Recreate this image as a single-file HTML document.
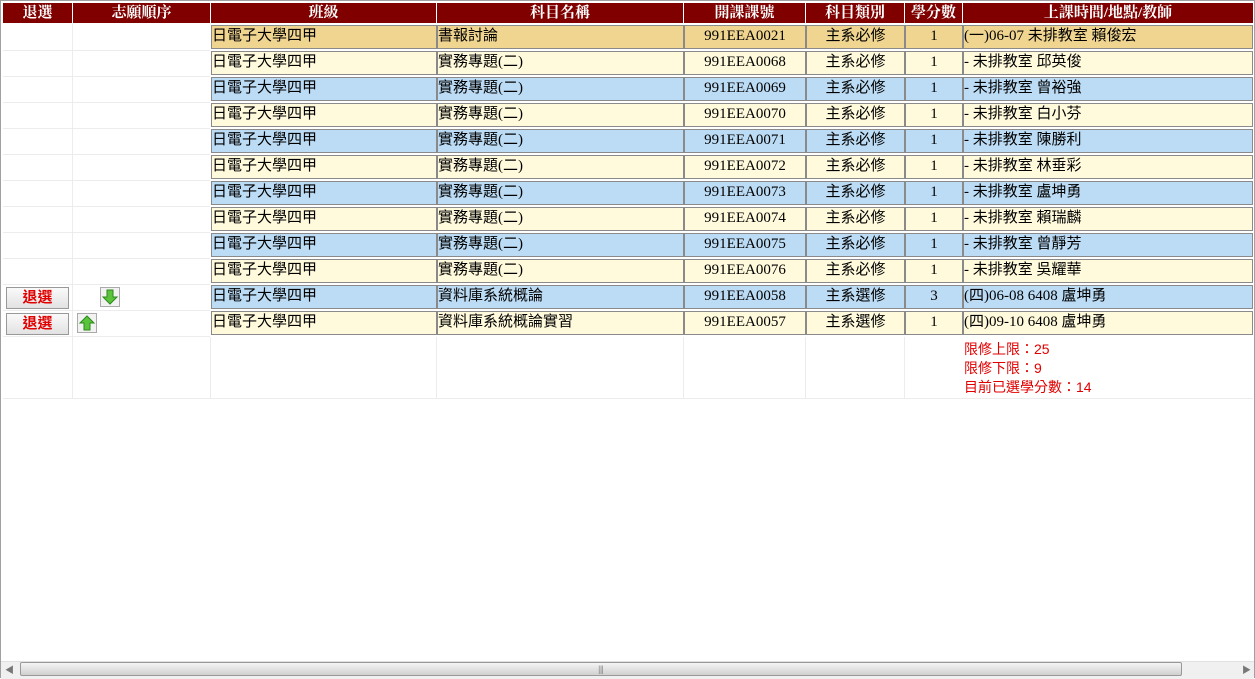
<!DOCTYPE html>
<html><head><meta charset="utf-8"><style>
body{margin:0;width:1255px;height:679px;overflow:hidden;background:#fff;position:relative;font-family:"Liberation Serif","Noto Serif CJK SC","Noto Sans CJK TC",serif;}
.frame{position:absolute;left:0;top:0;width:1253px;height:677px;border:1px solid #a0a0a0;border-bottom:none}
.h{position:absolute;top:3px;height:20px;background:#800000;color:#fff;font-weight:bold;font-size:15px;line-height:20px;text-align:center}
.c{position:absolute;height:24px;border:1px solid #8a8a8a;box-sizing:border-box;font-family:"Liberation Serif","Noto Sans CJK TC",serif;font-size:15px;line-height:20px;color:#000;white-space:nowrap;overflow:hidden}
.l{position:absolute;background:#ececec}
.btn{position:absolute;left:6px;width:63px;height:22px;box-sizing:border-box;border:1px solid #999;background:linear-gradient(#fafafa,#e2e2e2);color:#e00000;font-weight:bold;font-size:15px;text-align:center;line-height:20px;font-family:"Liberation Sans","Noto Sans CJK TC",sans-serif}
.ar{position:absolute;width:20px;height:20px;box-sizing:border-box;border:1px solid #aaa;background:#f2f2f2}
.red{position:absolute;left:964px;color:#e00000;font-size:14px;line-height:19px;font-family:"Liberation Sans","Noto Sans CJK TC",sans-serif}
</style></head><body>
<div class="frame"></div>
<div class="h" style="left:3px;width:69px">退選</div>
<div class="h" style="left:73px;width:137px">志願順序</div>
<div class="h" style="left:211px;width:225px">班級</div>
<div class="h" style="left:437px;width:246px">科目名稱</div>
<div class="h" style="left:684px;width:121px">開課課號</div>
<div class="h" style="left:806px;width:98px">科目類別</div>
<div class="h" style="left:905px;width:57px">學分數</div>
<div class="h" style="left:963px;width:290px">上課時間/地點/教師</div>
<div class="l" style="left:72px;top:24px;width:1px;height:375px"></div>
<div class="l" style="left:210px;top:337px;width:1px;height:62px"></div>
<div class="l" style="left:436px;top:337px;width:1px;height:62px"></div>
<div class="l" style="left:683px;top:337px;width:1px;height:62px"></div>
<div class="l" style="left:805px;top:337px;width:1px;height:62px"></div>
<div class="l" style="left:904px;top:337px;width:1px;height:62px"></div>
<div class="l" style="left:3px;top:398px;width:1250px;height:1px"></div>
<div id="rows"></div>
<div class="btn" style="top:287px">退選</div>
<div class="btn" style="top:313px">退選</div>
<div class="ar" style="left:100px;top:287px"><svg width="18" height="18" viewBox="0 0 18 18"><path d="M6 2h6v7h4l-7 7-7-7h4z" fill="#5cc43c" stroke="#2a8a1a"/></svg></div>
<div class="ar" style="left:77px;top:313px"><svg width="18" height="18" viewBox="0 0 18 18"><path d="M6 16h6V9h4L9 2 2 9h4z" fill="#5cc43c" stroke="#2a8a1a"/></svg></div>
<div class="red" style="top:340px">限修上限：25</div>
<div class="red" style="top:359px">限修下限：9</div>
<div class="red" style="top:378px">目前已選學分數：14</div>
<div style="position:absolute;left:1px;top:661px;width:1253px;height:17px;background:#f0f0f0;border-top:1px solid #e0e0e0"></div>
<div style="position:absolute;left:20px;top:662px;width:1162px;height:14px;border:1px solid #999;border-radius:2px;background:linear-gradient(#f4f4f4,#d0d0d0);box-sizing:border-box;text-align:center;font-size:9px;line-height:12px;color:#555">|||</div>
<div style="position:absolute;left:5px;top:663px;font-size:9px;color:#777">◀</div>
<div style="position:absolute;left:1242px;top:663px;font-size:9px;color:#777">▶</div>
<script>
var rows=[["書報討論","991EEA0021","主系必修","1","(一)06-07 未排教室 賴俊宏"],
["實務專題(二)","991EEA0068","主系必修","1","- 未排教室 邱英俊"],
["實務專題(二)","991EEA0069","主系必修","1","- 未排教室 曾裕強"],
["實務專題(二)","991EEA0070","主系必修","1","- 未排教室 白小芬"],
["實務專題(二)","991EEA0071","主系必修","1","- 未排教室 陳勝利"],
["實務專題(二)","991EEA0072","主系必修","1","- 未排教室 林垂彩"],
["實務專題(二)","991EEA0073","主系必修","1","- 未排教室 盧坤勇"],
["實務專題(二)","991EEA0074","主系必修","1","- 未排教室 賴瑞麟"],
["實務專題(二)","991EEA0075","主系必修","1","- 未排教室 曾靜芳"],
["實務專題(二)","991EEA0076","主系必修","1","- 未排教室 吳耀華"],
["資料庫系統概論","991EEA0058","主系選修","3","(四)06-08 6408 盧坤勇"],
["資料庫系統概論實習","991EEA0057","主系選修","1","(四)09-10 6408 盧坤勇"]];
var cols=[[211,226,"left"],[437,247,"left"],[684,122,"center"],[806,99,"center"],[905,58,"center"],[963,290,"left"]];
var h="";
rows.forEach(function(r,i){var t=25+26*i;var bg=i==0?"#f0d590":(i%2?"#fffadc":"#bcdcf5");
var v=["日電子大學四甲"].concat(r);
h+='<div class="l" style="left:3px;top:'+(t+25)+'px;width:207px;height:1px"></div>';
cols.forEach(function(c,j){h+='<div class="c" style="left:'+c[0]+'px;top:'+t+'px;width:'+c[1]+'px;background:'+bg+';text-align:'+c[2]+'">'+v[j]+'</div>';});});
document.getElementById("rows").innerHTML=h;
</script>
</body></html>
